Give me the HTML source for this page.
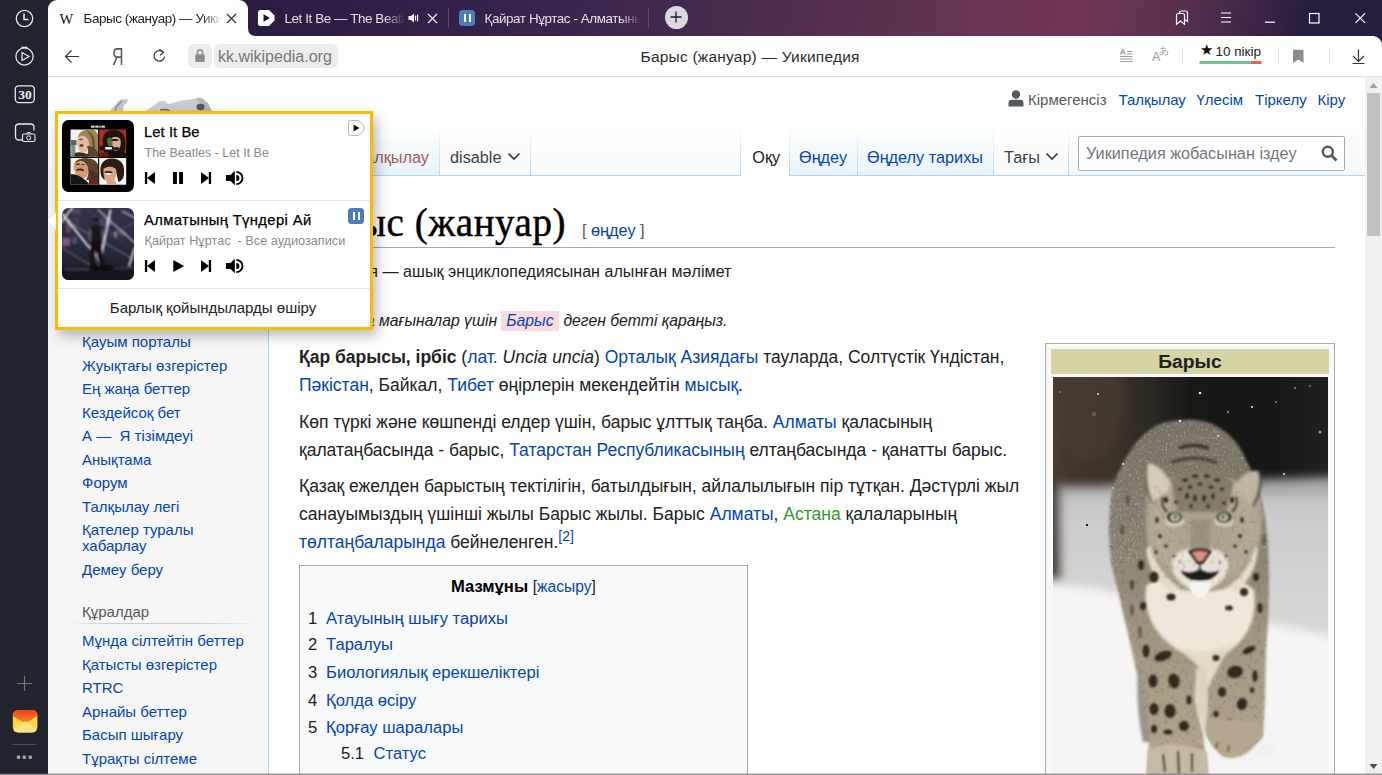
<!DOCTYPE html>
<html>
<head>
<meta charset="utf-8">
<title>Барыс (жануар) — Уикипедия</title>
<style>
*{box-sizing:border-box;margin:0;padding:0}
html,body{width:1382px;height:775px;overflow:hidden;background:#fff}
body{font-family:"Liberation Sans",sans-serif;position:relative;color:#202122}
.abs,.abs-all *{position:absolute}
div,span,svg,a{position:absolute}
a,.l{color:#0645ad;text-decoration:none}
span.i,a.i,b.i,i.i{position:static}
.nw{white-space:nowrap}
/* browser chrome */
#side{left:0;top:0;width:48px;height:775px;background:#21232f}
#tabbar{left:48px;top:0;width:1334px;height:48px;background:linear-gradient(97deg,#281b3e 0px,#2a1c40 200px,#33214a 420px,#43294e 630px,#58304f 800px,#6a3552 940px,#6d3653 1030px,#5e3150 1110px,#47294c 1175px,#30204400 1250px),#271d3e}
#tab1{left:48px;top:0;width:200px;height:36px;background:#fff;border-radius:9px 9px 0 0}
#toolbar{left:48px;top:36px;width:1334px;height:41px;background:#fff;border-bottom:1px solid #e0e0e0;border-top-right-radius:9px}
.tabtxt{font-size:13.4px;letter-spacing:-0.4px;line-height:36px;top:0.7px;white-space:nowrap;overflow:hidden;color:#e4dfea}
/* wiki page */
#page{left:48px;top:77px;width:1317px;height:698px;background:#f6f6f6;overflow:hidden}
#content{left:220px;top:98px;width:1097px;height:700px;background:#fff;border:1px solid #a7d7f9;border-right:none}
.sl{left:34px;font-size:15px;line-height:16px;white-space:nowrap;color:#0645ad}
.p{left:251px;font-size:17.5px;line-height:28px;white-space:nowrap;color:#202122}
.vt{font-size:16.25px;line-height:20px;white-space:nowrap;top:70px}
.vs{top:49px;width:1px;height:50px;background:linear-gradient(#ffffff 0,#a7d7f9 100%)}
.pl{font-size:15px;line-height:18px;white-space:nowrap;top:14px;color:#0645ad}
.toc{font-size:16.625px;line-height:20px;white-space:nowrap}
#scroll{left:1365px;top:77px;width:17px;height:698px;background:#f1f1f1}
</style>
</head>
<body>
<div id="side"></div>
<div id="tabbar"></div>
<div style="left:48px;top:0;width:10px;height:10px;background:#21232f"></div>
<div id="tab1"></div>
<div id="toolbar"></div>
<!--CHROME-START-->
<!-- sidebar icons -->
<svg style="left:0;top:0" width="48" height="160" viewBox="0 0 48 160" fill="none" stroke="#e8e8ec" stroke-width="1.3">
 <circle cx="24.5" cy="18.5" r="8.2"/><path d="M24 13.5 V19.5 H28.5" stroke-width="1.6"/>
 <circle cx="24.5" cy="56.5" r="8.6"/><path d="M21.5 47.5 H27.5" stroke-width="1.6"/><path d="M22 52.5 L29 56.5 L22 60.5Z" stroke-width="1.3"/>
 <rect x="15.3" y="85.8" width="19" height="16.8" rx="3.5"/>
 <path d="M23 140 H19 Q15.5 140 15.5 136.5 V127.5 Q15.5 124 19 124 H30.5 Q34 124 34 127.5 V130.5"/>
 <rect x="22.5" y="134" width="12.5" height="7.5" rx="1.5" stroke-width="1.1"/><circle cx="28.7" cy="137.8" r="2" stroke-width="1"/><path d="M26.5 134 L27.5 132.5 H30 L31 134" stroke-width="1"/>
</svg>
<span class="nw" style="left:16px;top:86px;width:18px;text-align:center;font-family:'Liberation Serif',serif;font-weight:bold;font-size:13.5px;line-height:17px;color:#f0f0f4">30</span>
<svg style="left:0;top:670px" width="48" height="105" viewBox="0 0 48 105">
 <path d="M17 13.5 H32 M24.5 6 V21" stroke="#73757f" stroke-width="1.2"/>
 <defs><linearGradient id="mg" x1="0" y1="0" x2="0" y2="1"><stop offset="0" stop-color="#f0401c"/><stop offset="1" stop-color="#ff8a1e"/></linearGradient></defs>
 <rect x="12.8" y="40" width="24.6" height="22.4" rx="5.5" fill="#ffd54a"/>
 <path d="M12.8 46 Q12.8 40 18.3 40 H31.9 Q37.4 40 37.4 46 L25.1 53.5Z" fill="url(#mg)"/>
 <path d="M13.5 60 L25.1 51 L36.7 60 Q36 62.4 32 62.4 H18.3 Q14 62.4 13.5 60Z" fill="#ffe08a"/>
 <rect x="12.7" y="74" width="23.3" height="1" fill="#4c4e5a"/>
 <rect x="16.8" y="85.5" width="3.4" height="3.6" rx="1" fill="#a0a2aa"/><rect x="22.6" y="85.5" width="3.4" height="3.6" rx="1" fill="#a0a2aa"/><rect x="28.6" y="85.5" width="3.4" height="3.6" rx="1" fill="#a0a2aa"/>
</svg>
<!-- tab 1 -->
<svg style="left:248px;top:28px" width="8" height="8"><path d="M0 8 H8 Q0 8 0 0Z" fill="#fff"/></svg>
<span class="nw" style="left:59.5px;top:9.5px;font-family:'Liberation Serif',serif;font-size:14.5px;line-height:18px;color:#111;letter-spacing:-1px">W</span>
<span class="tabtxt" style="left:83.5px;width:139px;color:#222;-webkit-mask-image:linear-gradient(90deg,#000 118px,transparent 138px)">Барыс (жануар) — Уикипедия</span>
<svg style="left:226px;top:13px" width="11" height="11"><path d="M1 1 L10 10 M10 1 L1 10" stroke="#333" stroke-width="1.2"/></svg>
<!-- tab 2 -->
<svg style="left:258px;top:10px" width="17" height="16" viewBox="0 0 17 16"><path d="M2.5 0 H11 L16.5 5.5 V10.5 L11 16 H2.5 Q0 16 0 13.5 V2.5 Q0 0 2.5 0Z" fill="#fff"/><path d="M5.5 4.2 L12 8 L5.5 11.8Z" fill="#1a1226"/></svg>
<span class="tabtxt" style="left:284.5px;width:121px;-webkit-mask-image:linear-gradient(90deg,#000 100px,transparent 120px)">Let It Be — The Beatles</span>
<svg style="left:408px;top:12px" width="12" height="12" viewBox="0 0 12 12"><path d="M0.5 4 H3 L6 1.5 V10.5 L3 8 H0.5Z" fill="#fff"/><path d="M7.6 3.5 V8.5 M9.6 2.5 V9.5" stroke="#fff" stroke-width="1.1"/></svg>
<svg style="left:427px;top:13px" width="11" height="11"><path d="M1 1 L10 10 M10 1 L1 10" stroke="#f0ecf4" stroke-width="1.2"/></svg>
<div style="left:448px;top:8px;width:1px;height:20px;background:#5b4a6c"></div>
<!-- tab 3 -->
<div style="left:459px;top:10px;width:16px;height:16px;border-radius:3.5px;background:#4d7cba"></div>
<div style="left:464px;top:14px;width:2.4px;height:8px;background:#fff"></div><div style="left:468.6px;top:14px;width:2.4px;height:8px;background:#fff"></div>
<span class="tabtxt" style="left:484.5px;width:156px;-webkit-mask-image:linear-gradient(90deg,#000 136px,transparent 156px)">Қайрат Нұртас - Алматының</span>
<div style="left:648px;top:8px;width:1px;height:20px;background:#5b4a6c"></div>
<div style="left:664.5px;top:5.5px;width:23px;height:23px;border-radius:50%;background:#dcd8e2"></div>
<svg style="left:670px;top:11px" width="12" height="12"><path d="M0.5 6 H11.5 M6 0.5 V11.5" stroke="#1e1a2a" stroke-width="1.3"/></svg>
<!-- window controls -->
<svg style="left:1170px;top:6px" width="212" height="24" viewBox="0 0 212 24" fill="none" stroke="#fff" stroke-width="1.2">
 <path d="M6.5 18.2 V9.3 Q6.5 7.5 8.3 7.5 H12.7 Q14.5 7.5 14.5 9.3 V18.2 L10.5 15 Z"/><path d="M9.5 7.5 V6.8 Q9.5 5 11.3 5 H15.7 Q17.5 5 17.5 6.8 V15.5 L14.5 13.5"/>
 <path d="M51 7 H61 M51 11.5 H61 M51 16 H61"/>
 <path d="M95 16.2 H105"/>
 <rect x="139.5" y="7.5" width="9.5" height="9.5"/>
 <path d="M185.5 7.3 L195 16.8 M195 7.3 L185.5 16.8"/>
</svg>
<!-- toolbar -->
<svg style="left:62px;top:46px" width="120" height="22" viewBox="0 0 120 22" fill="none" stroke="#333" stroke-width="1.2">
 <path d="M17 10.5 H3.5 M9.5 4.5 L3.5 10.5 L9.5 16.5"/>
 <path d="M101.3 6.3 A5.3 5.3 0 1 0 102.6 10.5" /><path d="M97.5 3.2 L101.6 6.2 L98 9.3" stroke-width="1.1"/>
</svg>
<span class="nw" style="left:111.5px;top:43.5px;font-size:23.5px;line-height:26px;color:#555;transform:scaleX(0.68);transform-origin:0 0;font-weight:normal">Я</span>
<div style="left:188px;top:44px;width:24px;height:24px;border-radius:6px;background:#ececec"></div>
<svg style="left:194px;top:48px" width="12" height="15" viewBox="0 0 12 15"><rect x="1.2" y="6.2" width="9.6" height="7.8" rx="1.5" fill="#8c8c8c"/><path d="M3.4 6.5 V4.5 Q3.4 1.8 6 1.8 Q8.6 1.8 8.6 4.5 V6.5" fill="none" stroke="#8c8c8c" stroke-width="1.6"/></svg>
<div style="left:214px;top:44px;width:124px;height:24px;border-radius:6px;background:#ececec"></div>
<span class="nw" style="left:218px;top:47px;font-size:16px;line-height:20px;color:#777">kk.wikipedia.org</span>
<span class="nw" style="left:640.5px;top:46.5px;font-size:15.5px;line-height:20px;color:#2c2c2c;letter-spacing:0.22px">Барыс (жануар) — Уикипедия</span>
<svg style="left:1115px;top:44px" width="260" height="24" viewBox="0 0 260 24" fill="none">
 <g stroke="#999" stroke-width="1"><path d="M12 7.5 H17.5 M12 10 H17.5 M5 12.5 H17.5 M5 15 H17.5 M5 17.5 H17.5"/><path d="M5.3 10.500 L7.8 5.500 L10.3 10.500 M6.2 9 H9.4" stroke-width="1.1"/></g>
 <path d="M67.5 4 V20 M163.5 4 V20 M214.5 4 V20" stroke="#e2e2e2" stroke-width="1"/>
 <path d="M178 5.8 H188.5 V19 L183.25 15.4 L178 19Z" fill="#8c8c8c"/>
 <path d="M243.5 5.5 V17 M238 12 L243.5 17.5 L249 12 M237.5 19.5 H249.5" stroke="#333" stroke-width="1.2"/>
 <rect x="84.3" y="17" width="52" height="3" rx="1.5" fill="#6cc58d"/><path d="M136 17 H145.3 Q146.8 17 146.8 18.5 Q146.8 20 145.3 20 H136Z" fill="#ea6350"/>
</svg>
<span class="nw" style="left:1152px;top:50px;font-size:12.5px;line-height:14px;color:#999">A</span>
<span class="nw" style="left:1159px;top:45px;font-size:10px;line-height:12px;color:#999">あ</span>
<span class="nw" style="left:1200px;top:42px;font-size:15px;line-height:16px;color:#111">★</span>
<span class="nw" style="left:1215.500px;top:44px;font-size:13.5px;line-height:15px;color:#222">10 пікір</span>

<!--CHROME-END-->
<div id="page">
<!--PAGE-START-->
<!-- head gradient background -->
<div style="left:0;top:0;width:1317px;height:99px;background:linear-gradient(#fff 50%,#f6f6f6 100%)"></div>
<!-- logo remnants -->
<svg style="left:56px;top:16px" width="120" height="20" viewBox="56 16 120 20">
 <defs><filter id="lgb"><feGaussianBlur stdDeviation="0.5"/></filter></defs>
 <g filter="url(#lgb)">
  <path d="M62 34 L66 29 L72 22.500 L80 22 L79 26 L76 28 L75 34Z" fill="#c6c6c9"/>
  <path d="M67 34 L69 29 L74 24" stroke="#8a8a8e" stroke-width="1.200" fill="none"/>
  <path d="M98 34 L108 27 L110 24.500 L117 24 L120 27 L134 23.500 L146 22 L149 20.500 L154 21 L160 26 L164 34Z" fill="#cbcbcf"/>
  <path d="M149 21 L154 21.500 L160 26.500 L164 34 H152Z" fill="#b4b4ba"/>
  <ellipse cx="152.500" cy="30" rx="4" ry="3.300" fill="#55555a"/>
  <path d="M112 33 L118 32.500 L122 34" stroke="#707074" stroke-width="1.500" fill="none"/>
 </g>
</svg>
<!-- personal -->
<svg style="left:960px;top:13px" width="16" height="17" viewBox="0 0 16 17"><circle cx="8" cy="4.5" r="4.2" fill="#54595d"/><path d="M0.5 16.5 V13 Q0.5 9.8 4 9.8 H12 Q15.5 9.8 15.5 13 V16.5Z" fill="#54595d"/></svg>
<span class="pl" style="left:980px;color:#54595d">Кірмегенсіз</span>
<span class="pl" style="left:1070.500px">Талқылау</span>
<span class="pl" style="left:1148.5px">Үлесім</span>
<span class="pl" style="left:1207px">Тіркелу</span>
<span class="pl" style="left:1269.5px">Кіру</span>
<!-- left tabs -->
<div style="left:220px;top:49px;width:171px;height:49px;background:linear-gradient(#fff 0,#e9f2f9 100%)"></div>
<div style="left:392px;top:49px;width:90px;height:49px;background:linear-gradient(#fff 0,#f9f9f9 100%)"></div>
<div style="left:483px;top:49px;width:209px;height:49px;background:linear-gradient(#fff 0,#fbfbfb 100%)"></div>
<div class="vs" style="left:391px"></div><div class="vs" style="left:482px"></div>
<span class="vt" style="left:308px;color:#a55858">Талқылау</span>
<span class="vt" style="left:402px;color:#3c3f44">disable</span>
<svg style="left:459px;top:75px" width="14" height="9" viewBox="0 0 14 9"><path d="M1.5 1.5 L7 7 L12.5 1.5" fill="none" stroke="#3a3a3a" stroke-width="1.7"/></svg>
<!-- right tabs -->
<div style="left:693px;top:49px;width:48px;height:51px;background:#fff"></div>
<div style="left:742px;top:49px;width:67px;height:49px;background:linear-gradient(#fff 0,#e9f2f9 100%)"></div>
<div style="left:810px;top:49px;width:135px;height:49px;background:linear-gradient(#fff 0,#e9f2f9 100%)"></div>
<div style="left:946px;top:49px;width:74px;height:49px;background:linear-gradient(#fff 0,#f9f9f9 100%)"></div>
<div class="vs" style="left:692px"></div><div class="vs" style="left:741px"></div><div class="vs" style="left:809px"></div><div class="vs" style="left:945px"></div><div class="vs" style="left:1020px"></div>
<span class="vt" style="left:704.3px;color:#202122">Оқу</span>
<span class="vt" style="left:751px;color:#0645ad">Өңдеу</span>
<span class="vt" style="left:819px;color:#0645ad">Өңделу тарихы</span>
<span class="vt" style="left:956px;color:#3c3f44">Тағы</span>
<svg style="left:997px;top:75px" width="14" height="9" viewBox="0 0 14 9"><path d="M1.5 1.5 L7 7 L12.5 1.5" fill="none" stroke="#3a3a3a" stroke-width="1.7"/></svg>
<!-- search -->
<div style="left:1030px;top:59px;width:267px;height:35px;border:1px solid #a2a9b1;border-radius:2px;background:#fff"></div>
<span class="nw" style="left:1038px;top:66px;font-size:16.25px;line-height:20px;color:#72777d">Уикипедия жобасынан іздеу</span>
<svg style="left:1273px;top:68px" width="17" height="17" viewBox="0 0 17 17"><circle cx="6.8" cy="6.8" r="5" fill="none" stroke="#54595d" stroke-width="2.4"/><path d="M10.5 10.5 L15.5 15.5" stroke="#54595d" stroke-width="2.8"/></svg>
<!-- content -->
<div id="content"></div>
<div style="left:693px;top:98px;width:48px;height:1px;background:#fff"></div>
<!-- sidebar links -->
<span class="sl" style="top:257px">Қауым порталы</span>
<span class="sl" style="top:281px">Жуықтағы өзгерістер</span>
<span class="sl" style="top:304px">Ең жаңа беттер</span>
<span class="sl" style="top:328px">Кездейсоқ бет</span>
<span class="sl" style="top:351px">А —&nbsp; Я тізімдеуі</span>
<span class="sl" style="top:375px">Анықтама</span>
<span class="sl" style="top:398px">Форум</span>
<span class="sl" style="top:422px">Талқылау легі</span>
<span class="sl" style="top:445px">Қателер туралы</span>
<span class="sl" style="top:461px">хабарлау</span>
<span class="sl" style="top:485px">Демеу беру</span>
<span class="sl" style="top:527px;color:#54595d">Құралдар</span>
<div style="left:24px;top:546px;width:186px;height:1px;background:linear-gradient(90deg,#f6f6f6 0,#c8ccd1 18%,#c8ccd1 70%,#f6f6f6 100%)"></div>
<span class="sl" style="top:556px">Мұнда сілтейтін беттер</span>
<span class="sl" style="top:580px">Қатысты өзгерістер</span>
<span class="sl" style="top:603px">RTRC</span>
<span class="sl" style="top:627px">Арнайы беттер</span>
<span class="sl" style="top:650px">Басып шығару</span>
<span class="sl" style="top:674px">Тұрақты сілтеме</span>
<!-- heading -->
<span class="nw" style="left:251px;top:123px;font-family:'Liberation Serif',serif;font-size:39px;line-height:46px;letter-spacing:0.55px;color:#000;-webkit-text-stroke:0.45px #000">Барыс (жануар)</span>
<span class="nw" style="left:534px;top:143px;font-size:16.25px;line-height:20px;color:#54595d">[ <span class="i l">өңдеу</span> ]</span>
<div style="left:251px;top:170px;width:1036px;height:1px;background:#a2a9b1"></div>
<span class="nw" style="left:251px;top:185px;font-size:16px;line-height:20px;letter-spacing:0.06px;color:#202122">Уикипедия — ашық энциклопедиясынан алынған мәлімет</span>
<span class="nw" style="left:283.5px;top:234px;font-size:15.75px;line-height:20px;font-style:italic;color:#202122">Басқа мағыналар үшін <span class="i l" style="background:#fbdadd;padding:1px 5px 2px 5px;margin:0 0.5px 0 -0.3px">Барыс</span> деген бетті қараңыз.</span>
<!-- paragraphs -->
<span class="p" style="top:266px"><b class="i">Қар барысы, ірбіс</b> (<span class="i l">лат.</span> <i class="i">Uncia uncia</i>) <span class="i l">Орталық Азиядағы</span> тауларда, Солтүстік Үндістан,</span>
<span class="p" style="top:294px"><span class="i l">Пәкістан</span>, Байкал, <span class="i l">Тибет</span> өңірлерін мекендейтін <span class="i l">мысық</span>.</span>
<span class="p" style="top:330.5px">Көп түркі және көшпенді елдер үшін, барыс ұлттық таңба. <span class="i l">Алматы</span> қаласының</span>
<span class="p" style="top:358.5px">қалатаңбасында - барыс, <span class="i l">Татарстан Республикасының</span> елтаңбасында - қанатты барыс.</span>
<span class="p" style="top:395px">Қазақ ежелден барыстың тектілігін, батылдығын, айлалылығын пір тұтқан. Дәстүрлі жыл</span>
<span class="p" style="top:423px">санауымыздың үшінші жылы Барыс жылы. Барыс <span class="i l">Алматы</span>, <span class="i l" style="color:#339933">Астана</span> қалаларының</span>
<span class="p" style="top:451px"><span class="i l">төлтаңбаларында</span> бейнеленген.<span class="i l" style="font-size:14px;position:relative;top:-7px">[2]</span></span>
<!-- toc -->
<div style="left:251px;top:488px;width:449px;height:240px;background:#f8f9fa;border:1px solid #a2a9b1"></div>
<span class="toc" style="left:403px;top:500px"><b class="i" style="color:#000">Мазмұны</b> <span class="i" style="font-size:15.6px">[<span class="i l">жасыру</span>]</span></span>
<span class="toc" style="left:260px;top:531.5px">1</span><span class="toc l" style="left:278px;top:531.5px">Атауының шығу тарихы</span>
<span class="toc" style="left:260px;top:557.5px">2</span><span class="toc l" style="left:278px;top:557.5px">Таралуы</span>
<span class="toc" style="left:260px;top:586px">3</span><span class="toc l" style="left:278px;top:586px">Биологиялық ерекшеліктері</span>
<span class="toc" style="left:260px;top:614px">4</span><span class="toc l" style="left:278px;top:614px">Қолда өсіру</span>
<span class="toc" style="left:260px;top:640.5px">5</span><span class="toc l" style="left:278px;top:640.5px">Қорғау шаралары</span>
<span class="toc" style="left:293px;top:667px">5.1</span><span class="toc l" style="left:325.5px;top:667px">Статус</span>
<!-- infobox -->
<div style="left:997px;top:266px;width:290px;height:460px;background:#f9f9f9;border:1px solid #aaa"></div>
<div style="left:1003px;top:272px;width:278px;height:25px;background:#d5d4a4"></div>
<span class="nw" style="left:1003px;top:271.5px;width:278px;text-align:center;font-size:19.25px;line-height:25px;font-weight:bold;color:#202122">Барыс</span>
<!--LEOPARD-START-->
<svg style="left:1005px;top:300px" width="275" height="398" viewBox="1053 377 275 398">
 <defs>
  <linearGradient id="bgd" x1="0" y1="0" x2="1" y2="0"><stop offset="0" stop-color="#43372e"/><stop offset="0.22" stop-color="#3d332b"/><stop offset="0.36" stop-color="#2b2722"/><stop offset="0.5" stop-color="#181916"/><stop offset="0.8" stop-color="#161716"/><stop offset="1" stop-color="#202020"/></linearGradient>
  <linearGradient id="snowbk" x1="0" y1="0" x2="0" y2="1"><stop offset="0" stop-color="#bcbabd"/><stop offset="0.1" stop-color="#cdcbcd"/><stop offset="0.4" stop-color="#d8d5d5"/><stop offset="1" stop-color="#dfdcdc"/></linearGradient>
  <linearGradient id="fur" x1="0" y1="0" x2="0" y2="1"><stop offset="0" stop-color="#777165"/><stop offset="0.3" stop-color="#868071"/><stop offset="0.6" stop-color="#a09580"/><stop offset="1" stop-color="#b7a88d"/></linearGradient>
  <radialGradient id="face" cx="0.5" cy="0.45" r="0.6"><stop offset="0" stop-color="#a99d88"/><stop offset="0.7" stop-color="#b5aa96"/><stop offset="1" stop-color="#a0967f"/></radialGradient>
  <filter id="lb1" x="-10%" y="-10%" width="120%" height="120%"><feGaussianBlur stdDeviation="5"/></filter>
  <filter id="lb2" x="-10%" y="-10%" width="120%" height="120%"><feGaussianBlur stdDeviation="1.6"/></filter>
  <filter id="lb3" x="-10%" y="-10%" width="120%" height="120%"><feGaussianBlur stdDeviation="0.8"/></filter>
  <filter id="lb4" x="-20%" y="-20%" width="140%" height="140%"><feGaussianBlur stdDeviation="0.5"/></filter>
  <filter id="furd" x="0" y="0" width="100%" height="100%"><feTurbulence type="fractalNoise" baseFrequency="0.28 0.2" numOctaves="3" seed="7" result="n"/><feColorMatrix in="n" type="matrix" values="0 0 0 0 0.17  0 0 0 0 0.15  0 0 0 0 0.11  2.4 0 0 0 -1.25" result="s"/><feComposite in="s" in2="SourceAlpha" operator="in"/></filter>
  <filter id="furl" x="0" y="0" width="100%" height="100%"><feTurbulence type="fractalNoise" baseFrequency="0.5 0.35" numOctaves="2" seed="21" result="n"/><feColorMatrix in="n" type="matrix" values="0 0 0 0 0.92  0 0 0 0 0.9  0 0 0 0 0.85  0 2.6 0 0 -1.45" result="s"/><feComposite in="s" in2="SourceAlpha" operator="in"/></filter>
  <clipPath id="lc"><rect x="1053" y="377" width="275" height="398"/></clipPath>
  <path id="bodyp" d="M1186 420 C1218 418 1238 440 1246 460 C1258 482 1266 510 1268 545 C1270 580 1269 615 1266 650 L1265 700 L1263 735 C1254 752 1236 762 1224 756 C1214 748 1206 738 1204 728 L1205 690 L1200 672 L1196 700 L1203 735 L1208 774 H1147 L1149 745 L1140 690 C1134 655 1124 620 1118 590 C1108 560 1107 525 1112 492 C1120 460 1140 432 1160 424 C1168 421 1178 420 1186 420Z"/>
  <path id="backp" d="M1186 420 C1218 418 1238 440 1246 460 C1258 482 1266 510 1268 545 L1262 560 L1258 470 L1232 480 L1172 478 L1147 464 L1142 560 L1112 570 C1107 545 1107 520 1112 492 C1120 460 1140 432 1160 424 C1168 421 1178 420 1186 420Z"/>
 </defs>
 <g clip-path="url(#lc)">
  <rect x="1053" y="377" width="275" height="398" fill="url(#bgd)"/>
  <g filter="url(#lb1)">
   <ellipse cx="1085" cy="400" rx="40" ry="60" fill="#4a3b30" opacity="0.6"/>
   <rect x="1030" y="486" width="320" height="300" fill="url(#snowbk)"/>
   <path d="M1030 490 L1110 485 L1160 483 L1340 477 V494 H1030Z" fill="#a8a6a8"/>
   <path d="M1030 377 H1060 L1060 470 L1062 580 H1030Z" fill="#4a3c32"/>
   <path d="M1030 581 L1100 590 L1200 610 L1340 638 V800 H1030Z" fill="#f6f4f4"/>
  </g>
  <!-- body -->
  <g filter="url(#lb2)">
   <use href="#bodyp" fill="url(#fur)"/>
   <path d="M1138 668 L1146 700 L1150 742 L1143 742 C1138 720 1136 690 1138 668Z" fill="#9a958c"/>
  </g>
  <g filter="url(#lb4)">
  <use href="#bodyp" filter="url(#furd)" opacity="0.5"/>
  <use href="#backp" filter="url(#furd)" opacity="0.45"/>
  <use href="#backp" filter="url(#furl)" opacity="0.4"/>
  </g>
  <g filter="url(#lb2)">
   <!-- chest -->
   <path d="M1146 586 C1165 570 1235 570 1254 590 C1258 620 1246 640 1228 652 L1212 668 L1204 690 L1200 668 L1190 655 C1162 645 1142 620 1146 586Z" fill="#eee6d8"/>
   <path d="M1160 640 C1180 655 1215 655 1236 640 L1222 660 L1207 690 L1200 668 L1186 655Z" fill="#e4dac8"/>
   <path d="M1196 668 L1206 668 L1208 700 L1206 738 L1198 715 L1195 695Z" fill="#ddd3bf"/>
   <!-- head -->
   <path d="M1146 500 C1146 486 1160 476 1200 474 C1240 476 1260 488 1262 506 C1264 540 1256 568 1236 584 C1222 594 1180 594 1166 584 C1150 570 1144 540 1146 500Z" fill="url(#face)"/>
   <path d="M1146.500 463.500 C1156 462 1168 474 1172 488 L1152 502 C1146 490 1143 474 1146.500 463.500Z" fill="#d5cbbb"/>
   <path d="M1146.500 463.500 C1145 476 1147 492 1152 502" stroke="#5a5246" stroke-width="2" fill="none"/>
   <path d="M1259 471.500 C1250 468 1238 478 1232 490 L1252 505 C1258 494 1262 482 1259 471.500Z" fill="#c2b6a2"/>
   <path d="M1259 471.500 C1262 482 1259 495 1253 506" stroke="#4c453b" stroke-width="2.500" fill="none"/>
   <path d="M1170 480 C1188 470 1216 470 1234 482 L1226 512 L1178 512Z" fill="#857c6c"/>
   <!-- muzzle -->
   <path d="M1172 562 C1175 550 1190 546 1200 552 C1210 546 1225 550 1228 562 C1230 575 1218 588 1200 592 C1182 588 1170 575 1172 562Z" fill="#e9e2d6"/>
   <path d="M1150 545 C1155 565 1165 578 1180 588 L1170 592 C1156 582 1148 566 1146 550Z" fill="#e5dccb"/>
   <path d="M1256 545 C1251 565 1241 578 1226 588 L1236 592 C1250 582 1256 566 1258 550Z" fill="#e5dccb"/>
   <path d="M1190 520 L1210 520 L1209 552 L1191 552Z" fill="#9b917f"/>
  </g>
  <path d="M1146 500 C1146 486 1160 476 1200 474 C1240 476 1260 488 1262 506 C1264 540 1256 568 1236 584 C1222 594 1180 594 1166 584 C1150 570 1144 540 1146 500Z" filter="url(#furd)" opacity="0.32"/>
  <g filter="url(#lb3)">
   <ellipse cx="1174.500" cy="522" rx="10" ry="5" fill="#e4dccc" opacity="0.7"/><ellipse cx="1224" cy="522" rx="10" ry="5" fill="#e4dccc" opacity="0.7"/>
   <!-- eyes, nose -->
   <ellipse cx="1174.500" cy="517.500" rx="7.500" ry="5.500" fill="#2a261f"/><ellipse cx="1224" cy="517.500" rx="7.500" ry="5.500" fill="#2a261f"/>
   <ellipse cx="1175" cy="517.500" rx="5" ry="4" fill="#b3b89f"/><ellipse cx="1223.500" cy="517.500" rx="5" ry="4" fill="#b3b89f"/>
   <circle cx="1175.500" cy="517" r="1.400" fill="#222"/><circle cx="1223" cy="517" r="1.400" fill="#222"/>
   <path d="M1167 512 Q1160 505 1163 497" stroke="#2a241c" stroke-width="1.600" fill="none"/><path d="M1232 512 Q1239 505 1236 497" stroke="#2a241c" stroke-width="1.600" fill="none"/>
   <path d="M1188 551 Q1200 546 1212 551 L1203 564 H1197Z" fill="#2a1f1c"/><path d="M1192 552.500 Q1200 549.500 1208 552.500 L1202 561 H1198Z" fill="#d9958b"/>
   <path d="M1200 563 V570" stroke="#2a1f1c" stroke-width="1.400"/>
   <path d="M1180 570 Q1190 576 1200 569 Q1210 576 1220 570 Q1212 582 1200 581 Q1188 582 1180 570Z" fill="#1f1a18"/>
   <path d="M1188 583 Q1200 579 1212 583 Q1208 597 1200 598 Q1192 597 1188 583Z" fill="#f7f4ee"/>
   <!-- head spots -->
   <g fill="#2b251d">
    <ellipse cx="1185" cy="480" rx="3" ry="1.500"/><ellipse cx="1195" cy="476" rx="3" ry="1.500"/><ellipse cx="1207" cy="476" rx="3" ry="1.500"/><ellipse cx="1217" cy="480" rx="3" ry="1.500"/>
    <ellipse cx="1190" cy="487" rx="2.500" ry="1.500"/><ellipse cx="1200" cy="484" rx="2.500" ry="1.500"/><ellipse cx="1211" cy="487" rx="2.500" ry="1.500"/><ellipse cx="1180" cy="489" rx="2" ry="1.500"/><ellipse cx="1222" cy="489" rx="2" ry="1.500"/>
    <ellipse cx="1187" cy="496" rx="1.500" ry="3"/><ellipse cx="1195" cy="498" rx="1.500" ry="3.500"/><ellipse cx="1204" cy="498" rx="1.500" ry="3.500"/><ellipse cx="1213" cy="496" rx="1.500" ry="3"/><ellipse cx="1191" cy="506" rx="1.200" ry="2.500"/><ellipse cx="1208" cy="506" rx="1.200" ry="2.500"/>
    <ellipse cx="1166" cy="500" rx="2" ry="3"/><ellipse cx="1232" cy="500" rx="2" ry="3"/><ellipse cx="1157" cy="520" rx="1.500" ry="3"/><ellipse cx="1242" cy="520" rx="1.500" ry="3"/><ellipse cx="1176" cy="502" rx="2" ry="1.500"/><ellipse cx="1224" cy="503" rx="2" ry="1.500"/>
    <ellipse cx="1160" cy="536" rx="2" ry="2"/><ellipse cx="1240" cy="536" rx="2" ry="2"/><ellipse cx="1166" cy="546" rx="2" ry="1.500"/><ellipse cx="1235" cy="546" rx="2" ry="1.500"/><ellipse cx="1156" cy="552" rx="1.500" ry="2"/><ellipse cx="1246" cy="552" rx="1.500" ry="2"/>
    <ellipse cx="1174" cy="556" rx="1.500" ry="1"/><ellipse cx="1226" cy="556" rx="1.500" ry="1"/><ellipse cx="1180" cy="562" rx="1.200" ry="0.800"/><ellipse cx="1220" cy="562" rx="1.200" ry="0.800"/>
    <path d="M1178 447 Q1193 440 1210 447 L1208 450 Q1193 444 1180 450Z" opacity="0.8"/><path d="M1170 461 Q1193 452 1218 461 L1216 464 Q1193 456 1172 464Z" opacity="0.6"/>
   </g>
   <!-- body spots -->
   <g fill="#30291f">
    <ellipse cx="1154" cy="577" rx="4.500" ry="5.500"/><ellipse cx="1141" cy="565" rx="3" ry="5"/><ellipse cx="1171" cy="597" rx="4.500" ry="3.500"/><ellipse cx="1143" cy="606" rx="3" ry="4"/><ellipse cx="1132" cy="585" rx="2" ry="5" opacity="0.7"/>
    <ellipse cx="1244" cy="592" rx="4" ry="4"/><ellipse cx="1256" cy="577" rx="3" ry="4"/><ellipse cx="1229" cy="608" rx="4" ry="2.500"/><ellipse cx="1260" cy="608" rx="2.500" ry="5"/>
    <ellipse cx="1146" cy="651" rx="3.500" ry="6.500"/><ellipse cx="1163" cy="656" rx="9" ry="4.500" transform="rotate(-20 1163 656)"/><ellipse cx="1153" cy="681" rx="4.500" ry="6.500"/><ellipse cx="1174" cy="681" rx="5.500" ry="7.500" transform="rotate(-15 1174 681)"/>
    <ellipse cx="1154" cy="709" rx="4.500" ry="6"/><ellipse cx="1170" cy="711" rx="5.500" ry="7"/><ellipse cx="1184" cy="726" rx="5" ry="5"/><ellipse cx="1154" cy="729" rx="3" ry="4"/><ellipse cx="1168" cy="732" rx="4.500" ry="2.500"/><ellipse cx="1189" cy="700" rx="2.500" ry="4.500"/>
    <ellipse cx="1235" cy="672" rx="8" ry="6" transform="rotate(-15 1235 672)"/><ellipse cx="1249" cy="650" rx="7" ry="3" transform="rotate(-25 1249 650)"/><ellipse cx="1222" cy="692" rx="4" ry="5"/><ellipse cx="1242" cy="704" rx="5" ry="6" transform="rotate(20 1242 704)"/>
    <ellipse cx="1229" cy="722" rx="5" ry="3.500"/><ellipse cx="1216" cy="714" rx="2.500" ry="3.500"/><ellipse cx="1255" cy="676" rx="2.500" ry="6"/><ellipse cx="1216" cy="658" rx="3.500" ry="3"/><ellipse cx="1252" cy="690" rx="2" ry="3"/>
    <ellipse cx="1122" cy="530" rx="2" ry="5" opacity="0.5"/><ellipse cx="1128" cy="500" rx="2" ry="5" opacity="0.5"/><ellipse cx="1264" cy="540" rx="1.500" ry="5" opacity="0.5"/><ellipse cx="1132" cy="610" rx="1.500" ry="6" opacity="0.6"/><ellipse cx="1140" cy="632" rx="1.500" ry="6" opacity="0.6"/>
   </g>
   <!-- paws -->
   <path d="M1148 750 Q1176 738 1207 752 L1208 774 H1147Z" fill="#c6baa2"/>
   <path d="M1163 754 L1165 772 M1178 751 L1179 774 M1192 753 L1192 772" stroke="#3a3024" stroke-width="2.200"/>
   <path d="M1206 728 C1208 742 1218 756 1228 757 C1238 754 1246 748 1262 738 L1262 722 L1208 718Z" fill="#b5a78f"/>
   <path d="M1216 748 L1218 742 M1228 752 L1229 745" stroke="#4a3f30" stroke-width="1.500"/>
   <ellipse cx="1265" cy="750" rx="11" ry="6.500" fill="#f2f0f0"/>
  </g>
  <!-- snow flakes -->
  <g fill="#e8e8ea" filter="url(#lb4)">
   <circle cx="1200" cy="393" r="1.300"/><circle cx="1098" cy="394" r="1"/><circle cx="1252" cy="407" r="1"/><circle cx="1228" cy="412" r="1.200" opacity="0.5"/><circle cx="1320" cy="432" r="1.500" opacity="0.6"/><circle cx="1295" cy="388" r="1.200" opacity="0.4"/>
   <circle cx="1284" cy="474" r="1.200" opacity="0.7"/><circle cx="1094" cy="414" r="2.200" opacity="0.22"/><circle cx="1180" cy="421" r="1.200"/><circle cx="1218" cy="436" r="1"/><circle cx="1123" cy="464" r="1"/><circle cx="1113" cy="488" r="0.800"/>
   <circle cx="1276" cy="402" r="1" opacity="0.5"/><circle cx="1060" cy="392" r="1" opacity="0.4"/><circle cx="1310" cy="386" r="0.900" opacity="0.5"/>
  </g>
  <rect x="1086" y="524" width="2" height="2" fill="#111"/>
 </g>
</svg>

<!--LEOPARD-END-->

<!--PAGE-END-->
</div>
<div id="scroll">
  <div style="left:2px;top:16px;width:13px;height:143px;background:#c1c1c1"></div>
  <svg style="left:0;top:0" width="17" height="17"><path d="M4.5 11 L8.5 6 L12.5 11Z" fill="#a3a3a3"/></svg>
  <svg style="left:0;top:681px" width="17" height="17"><path d="M4.5 6 L8.5 11 L12.5 6Z" fill="#505050"/></svg>
</div>
<div style="left:0;top:774px;width:1382px;height:1px;background:#909090"></div><div style="left:0;top:773px;width:1382px;height:1px;background:rgba(110,110,110,0.3)"></div>
<!--POPUP-START-->
<div id="popup" style="left:55px;top:111px;width:318px;height:219px;background:#fff;border:3px solid #fbbc05;box-shadow:4px 6px 12px rgba(0,0,0,0.27)">
 <svg style="left:-10px;top:98px" width="8" height="18"><path d="M8 0 L0.5 9 L8 18Z" fill="#fff"/></svg>
 <!-- album 1 -->
 <svg style="left:4px;top:6px" width="72" height="72" viewBox="0 0 72 72">
  <defs><clipPath id="c1"><rect width="72" height="72" rx="6.5"/></clipPath><filter id="b1" x="-5%" y="-5%" width="110%" height="110%"><feGaussianBlur stdDeviation="0.75"/></filter>
   <clipPath id="q1"><rect x="8.5" y="9.5" width="27.6" height="27"/></clipPath><clipPath id="q2"><rect x="37.2" y="9.5" width="27" height="27"/></clipPath>
   <clipPath id="q3"><rect x="8.5" y="37.9" width="27.6" height="26.8"/></clipPath><clipPath id="q4"><rect x="37.2" y="37.9" width="27" height="26.8"/></clipPath></defs>
  <g clip-path="url(#c1)"><rect width="72" height="72" fill="#000"/>
   <g clip-path="url(#q1)"><rect x="8" y="9" width="29" height="28" fill="#f4f2ec"/><g filter="url(#b1)">
    <rect x="9.200" y="21" width="4.200" height="16" fill="#7f8c8c"/><rect x="9" y="20" width="5.500" height="5" fill="#5f6a6a"/>
    <path d="M16 20 C15 12 22 9 29 9.500 C36 10 37 16 37 24 L37 38 L26 38 C30 30 26 24 24 18 C21 15 18 17 16 20Z" fill="#9b8656"/>
    <path d="M24 10 C30 12 34 18 33 28 L30 28 C31 20 28 14 24 10Z" fill="#6b5a38"/>
    <path d="M15.500 19 C17 15 22 15 25 18 C28 22 28 28 24 32 C20 34 16 31 16 27 C14.500 25 15 22 15.500 19Z" fill="#e8b9a0"/>
    <ellipse cx="19.500" cy="25.500" rx="2" ry="1.300" fill="#5a2a22"/><ellipse cx="19" cy="19.500" rx="2.200" ry="0.700" fill="#6a5236"/>
    <path d="M25 26 C30 26 36 28 37 38 L24 38 C26 34 27 30 25 26Z" fill="#59452c"/>
    <path d="M13 33 C18 31 26 33 31 38 L12 38Z" fill="#3a2e24"/>
   </g></g>
   <g clip-path="url(#q2)"><rect x="37" y="9" width="28" height="28" fill="#ad2a22"/><g filter="url(#b1)">
    <path d="M41 24 C39 14 46 9.500 52 10 C60 10 64 16 63 24 C64 30 62 34 58 37 L46 37 C42 34 41 28 41 24Z" fill="#1b1410"/>
    <path d="M49 19 C51 16 57 16 58.500 20 C59.500 25 58 30 54 31 C50 31 48.500 26 49 19Z" fill="#d6ab92"/>
    <path d="M45 19 C47 17 50 17 50.500 20 L50.500 27 C48 28 45 26 45 19Z" fill="#5e6a3b"/>
    <ellipse cx="53" cy="20" rx="3.500" ry="1" fill="#1b1410"/><ellipse cx="54.500" cy="28.500" rx="3" ry="1.500" fill="#2a1a14"/>
    <rect x="37.500" y="26" width="14.500" height="4.600" rx="2" fill="#1a1c22"/><rect x="43" y="27" width="7" height="2.600" rx="1.200" fill="#d9eef6"/>
    <path d="M45 31 C50 30 60 30 65 34 L65 37 L45 37Z" fill="#17110e"/><path d="M37 33 L46 32 L47 37 L37 37Z" fill="#6a1c18"/>
   </g></g>
   <g clip-path="url(#q3)"><rect x="8" y="37" width="29" height="28" fill="#f1efe9"/><g filter="url(#b1)">
    <path d="M12.500 46 C12 40 18 38 24 38.200 C32 38 37 42 37 50 L37 60 L24 60 C28 54 27 46 22 42 C18 40 14 42 12.500 46Z" fill="#5d432a"/>
    <path d="M12 44 C14 40.500 21 40.500 24 44 C27 48 27 54 24 57 C19 60 14 57 13 52 C11.500 50 11.500 47 12 44Z" fill="#cf9a72"/>
    <path d="M14.500 49.200 C17 48 20 48.200 22 50 L21.500 51.200 C19 50 17 50 14.500 50.800Z" fill="#2c1c12"/><ellipse cx="16" cy="44.200" rx="2.200" ry="0.700" fill="#3a2818"/><ellipse cx="21" cy="44.500" rx="1.600" ry="0.600" fill="#3a2818"/>
    <path d="M26 50 C32 50 37 54 37 60 L37 65 L27 65 C29 60 28 54 26 50Z" fill="#4c3420"/>
    <path d="M8 54 C14 54 22 57 28 65 L8 65Z" fill="#191914"/><path d="M27 58.500 C31 58 35 60 37 62 L37 65 L27 65Z" fill="#70281f"/>
   </g></g>
   <g clip-path="url(#q4)"><rect x="37" y="37" width="28" height="28" fill="#f6f5f2"/><g filter="url(#b1)">
    <path d="M38.500 52 C37.500 42 44 38.200 50 38.500 C58 38.500 63 44 62 52 C62.500 57 60 61 56.500 62 L54 52 L44 50 L42.500 60 C40 58 38.500 55 38.500 52Z" fill="#2a1d15"/>
    <path d="M41.500 49 C42 45 47 44 51 45.500 C54.500 47 55 52 54 56 C53 60 50 63 47 62.500 C43 62 41 56 41.500 49Z" fill="#d9a585"/>
    <path d="M42 46 C45 43 50 43 54 46.500 L54 49 C50 46 46 46 42 48.500Z" fill="#2a1d15"/>
    <path d="M42.500 51.500 C45 50.500 48.500 50.800 50.500 52.200 L50 53.300 C48 52.500 45 52.500 43 53Z" fill="#2c1c14"/>
    <path d="M43.500 53 L49.500 53.200 C49 55.500 44.500 55.500 43.500 53Z" fill="#fbfbf8"/>
    <path d="M45 62 L53 60 L55 65 L44 65Z" fill="#d9a585"/>
   </g></g>
   <rect x="28.900" y="5.700" width="14" height="1.900" fill="#e4e4e4"/><rect x="32.700" y="5.700" width="0.700" height="1.900" fill="#000"/><rect x="36.600" y="5.700" width="0.700" height="1.900" fill="#000"/><rect x="38.700" y="5.700" width="0.700" height="1.900" fill="#000"/>
  </g>
 </svg>
 <span class="nw" style="left:86px;top:8.500px;font-size:14.8px;line-height:18px;color:#000;-webkit-text-stroke:0.25px #000;letter-spacing:0.06px">Let It Be</span>
 <span class="nw" style="left:86.5px;top:31.700px;font-size:12.5px;line-height:15px;color:#8a8a8a">The Beatles - Let It Be</span>
 <svg style="left:86px;top:56px" width="100" height="16" viewBox="0 0 100 16" fill="#000">
  <rect x="0.9" y="2" width="2.3" height="12"/><path d="M11 2 V14 L3 8Z"/>
  <rect x="29" y="2" width="3.9" height="12"/><rect x="35.1" y="2" width="3.9" height="12"/>
  <rect x="64.8" y="2" width="2.3" height="12"/><path d="M57 2 V14 L65 8Z"/>
  <path d="M82 5 H86.5 L90.8 0.7 V15.3 L86.5 11 H82Z"/><path d="M92.3 4.9 A3.1 3.1 0 0 1 92.3 11.1Z"/><path d="M92.3 0.9 A7.1 7.1 0 0 1 92.3 15.1 V13.2 A5.2 5.2 0 0 0 92.3 2.8Z"/>
 </svg>
 <svg style="left:290px;top:6px" width="17" height="16" viewBox="0 0 17 16"><path d="M2.5 0.5 H10.5 L16 5.5 V10.5 L10.5 15.5 H2.5 Q0.5 15.5 0.5 13.5 V2.5 Q0.5 0.5 2.5 0.5Z" fill="#fff" stroke="#b8b8b8" stroke-width="1"/><path d="M5.5 4.5 L11.5 8 L5.5 11.5Z" fill="#111"/></svg>
 <div style="left:0;top:86px;width:312px;height:1px;background:#e6e6e6"></div>
 <!-- album 2 -->
 <svg style="left:4px;top:94px" width="72" height="72" viewBox="0 0 72 72">
  <defs><clipPath id="c2"><rect width="72" height="72" rx="6.5"/></clipPath><filter id="b2" x="-5%" y="-5%" width="110%" height="110%"><feGaussianBlur stdDeviation="0.8"/></filter>
  <linearGradient id="g2" x1="0" y1="0" x2="0" y2="1"><stop offset="0" stop-color="#34324a"/><stop offset="0.5" stop-color="#2a2a3c"/><stop offset="0.8" stop-color="#1f1f2c"/><stop offset="0.84" stop-color="#15151d"/><stop offset="1" stop-color="#15151e"/></linearGradient></defs>
  <g clip-path="url(#c2)"><rect width="72" height="72" fill="url(#g2)"/>
   <g filter="url(#b2)">
    <rect x="4" y="11" width="5" height="14" fill="#6a4e74" opacity="0.8"/><rect x="10" y="0" width="9" height="6" fill="#5c4668" opacity="0.8"/><rect x="10.500" y="9" width="7" height="8" fill="#4a3a5a" opacity="0.7"/>
    <rect x="0" y="30" width="8" height="8" fill="#8a6690" opacity="0.8"/><rect x="10" y="29" width="5" height="7" fill="#6a5478" opacity="0.7"/><rect x="38" y="10" width="11" height="8" fill="#5a4670" opacity="0.7"/><rect x="56" y="23" width="8" height="5" fill="#4a3e62" opacity="0.8"/>
    <path d="M10.500 -1 L-1 15" stroke="#f4f2ff" stroke-width="1.700" opacity="0.9"/>
    <path d="M0 5.500 L28 40.500" stroke="#f6f4ff" stroke-width="2" opacity="0.92"/>
    <path d="M36 1.500 L46 11 L73 35" stroke="#d4d2ea" stroke-width="1.400" opacity="0.85"/>
    <path d="M48.500 1.500 L43 30 L37.500 58" stroke="#f8f6ff" stroke-width="2" opacity="0.92"/>
    <path d="M60 3 L73 10" stroke="#e8e6f8" stroke-width="1.400" opacity="0.85"/>
    <path d="M72.500 40 L67 58" stroke="#e6e6f4" stroke-width="1.900" opacity="0.9"/>
    <path d="M10 16.500 L73 52" stroke="#8c8caa" stroke-width="1.200" opacity="0.7"/>
    <path d="M0 40 L30 58" stroke="#8a8aa6" stroke-width="1.200" opacity="0.6"/>
    <path d="M47 28 L73 14" stroke="#7c7c9a" stroke-width="1" opacity="0.6"/>
    <path d="M26 2 L60 34" stroke="#6e6e8c" stroke-width="1" opacity="0.5"/>
    <path d="M33 44 L38 57" stroke="#dcdcee" stroke-width="1.500" opacity="0.85"/>
    <ellipse cx="33.700" cy="13" rx="2.600" ry="3.200" fill="#3a2e30"/><ellipse cx="33.700" cy="11.500" rx="2.800" ry="2" fill="#14121a"/>
    <path d="M27.500 19 Q33.500 15.500 40.500 19 L39.500 34 L29 34Z" fill="#17151c"/>
    <path d="M27.500 19 L26 30 L28.500 34 L29.500 24Z" fill="#6a5658"/><path d="M40.500 19 L42 30 L40 35 L39 24Z" fill="#5c4a50"/>
    <path d="M29 33 L27.500 60 H31.500 L34 40 L37.500 60 H42 L39.500 33Z" fill="#121118"/>
    <rect x="0" y="60" width="72" height="12" fill="#14141c"/><rect x="29" y="57.500" width="21" height="5.500" fill="#0a0a10"/>
    <rect x="3" y="60" width="24" height="2" fill="#3c3c4e"/><rect x="52" y="59" width="20" height="2" fill="#34344a"/>
    <rect x="52.500" y="23" width="2" height="7" fill="#b8b8d0" opacity="0.7"/>
   </g>
  </g>
 </svg>
 <span class="nw" style="left:86px;top:97px;font-size:14.8px;line-height:18px;color:#000;-webkit-text-stroke:0.25px #000;letter-spacing:0.36px">Алматының Түндері Ай</span>
 <span class="nw" style="left:86.5px;top:119.700px;font-size:12.7px;line-height:15px;color:#8a8a8a">Қайрат Нұртас&nbsp; - Все аудиозаписи</span>
 <svg style="left:86px;top:144px" width="100" height="16" viewBox="0 0 100 16" fill="#000">
  <rect x="0.9" y="2" width="2.3" height="12"/><path d="M11 2 V14 L3 8Z"/>
  <path d="M29.300 2 L40.200 8 L29.300 14Z"/>
  <rect x="64.8" y="2" width="2.3" height="12"/><path d="M57 2 V14 L65 8Z"/>
  <path d="M82 5 H86.5 L90.8 0.7 V15.3 L86.5 11 H82Z"/><path d="M92.3 4.9 A3.1 3.1 0 0 1 92.3 11.1Z"/><path d="M92.3 0.9 A7.1 7.1 0 0 1 92.3 15.1 V13.2 A5.2 5.2 0 0 0 92.3 2.8Z"/>
 </svg>
 <div style="left:290px;top:94px;width:16px;height:16px;border-radius:3.5px;background:#4d7cba"></div>
 <div style="left:295px;top:98px;width:2.4px;height:8px;background:#fff"></div><div style="left:299.6px;top:98px;width:2.4px;height:8px;background:#fff"></div>
 <div style="left:0;top:174px;width:312px;height:1px;background:#e6e6e6"></div>
 <span class="nw" style="left:0;top:185px;width:310px;text-align:center;font-size:15px;line-height:18px;color:#222">Барлық қойындыларды өшіру</span>
</div>

<!--POPUP-END-->
</body>
</html>
